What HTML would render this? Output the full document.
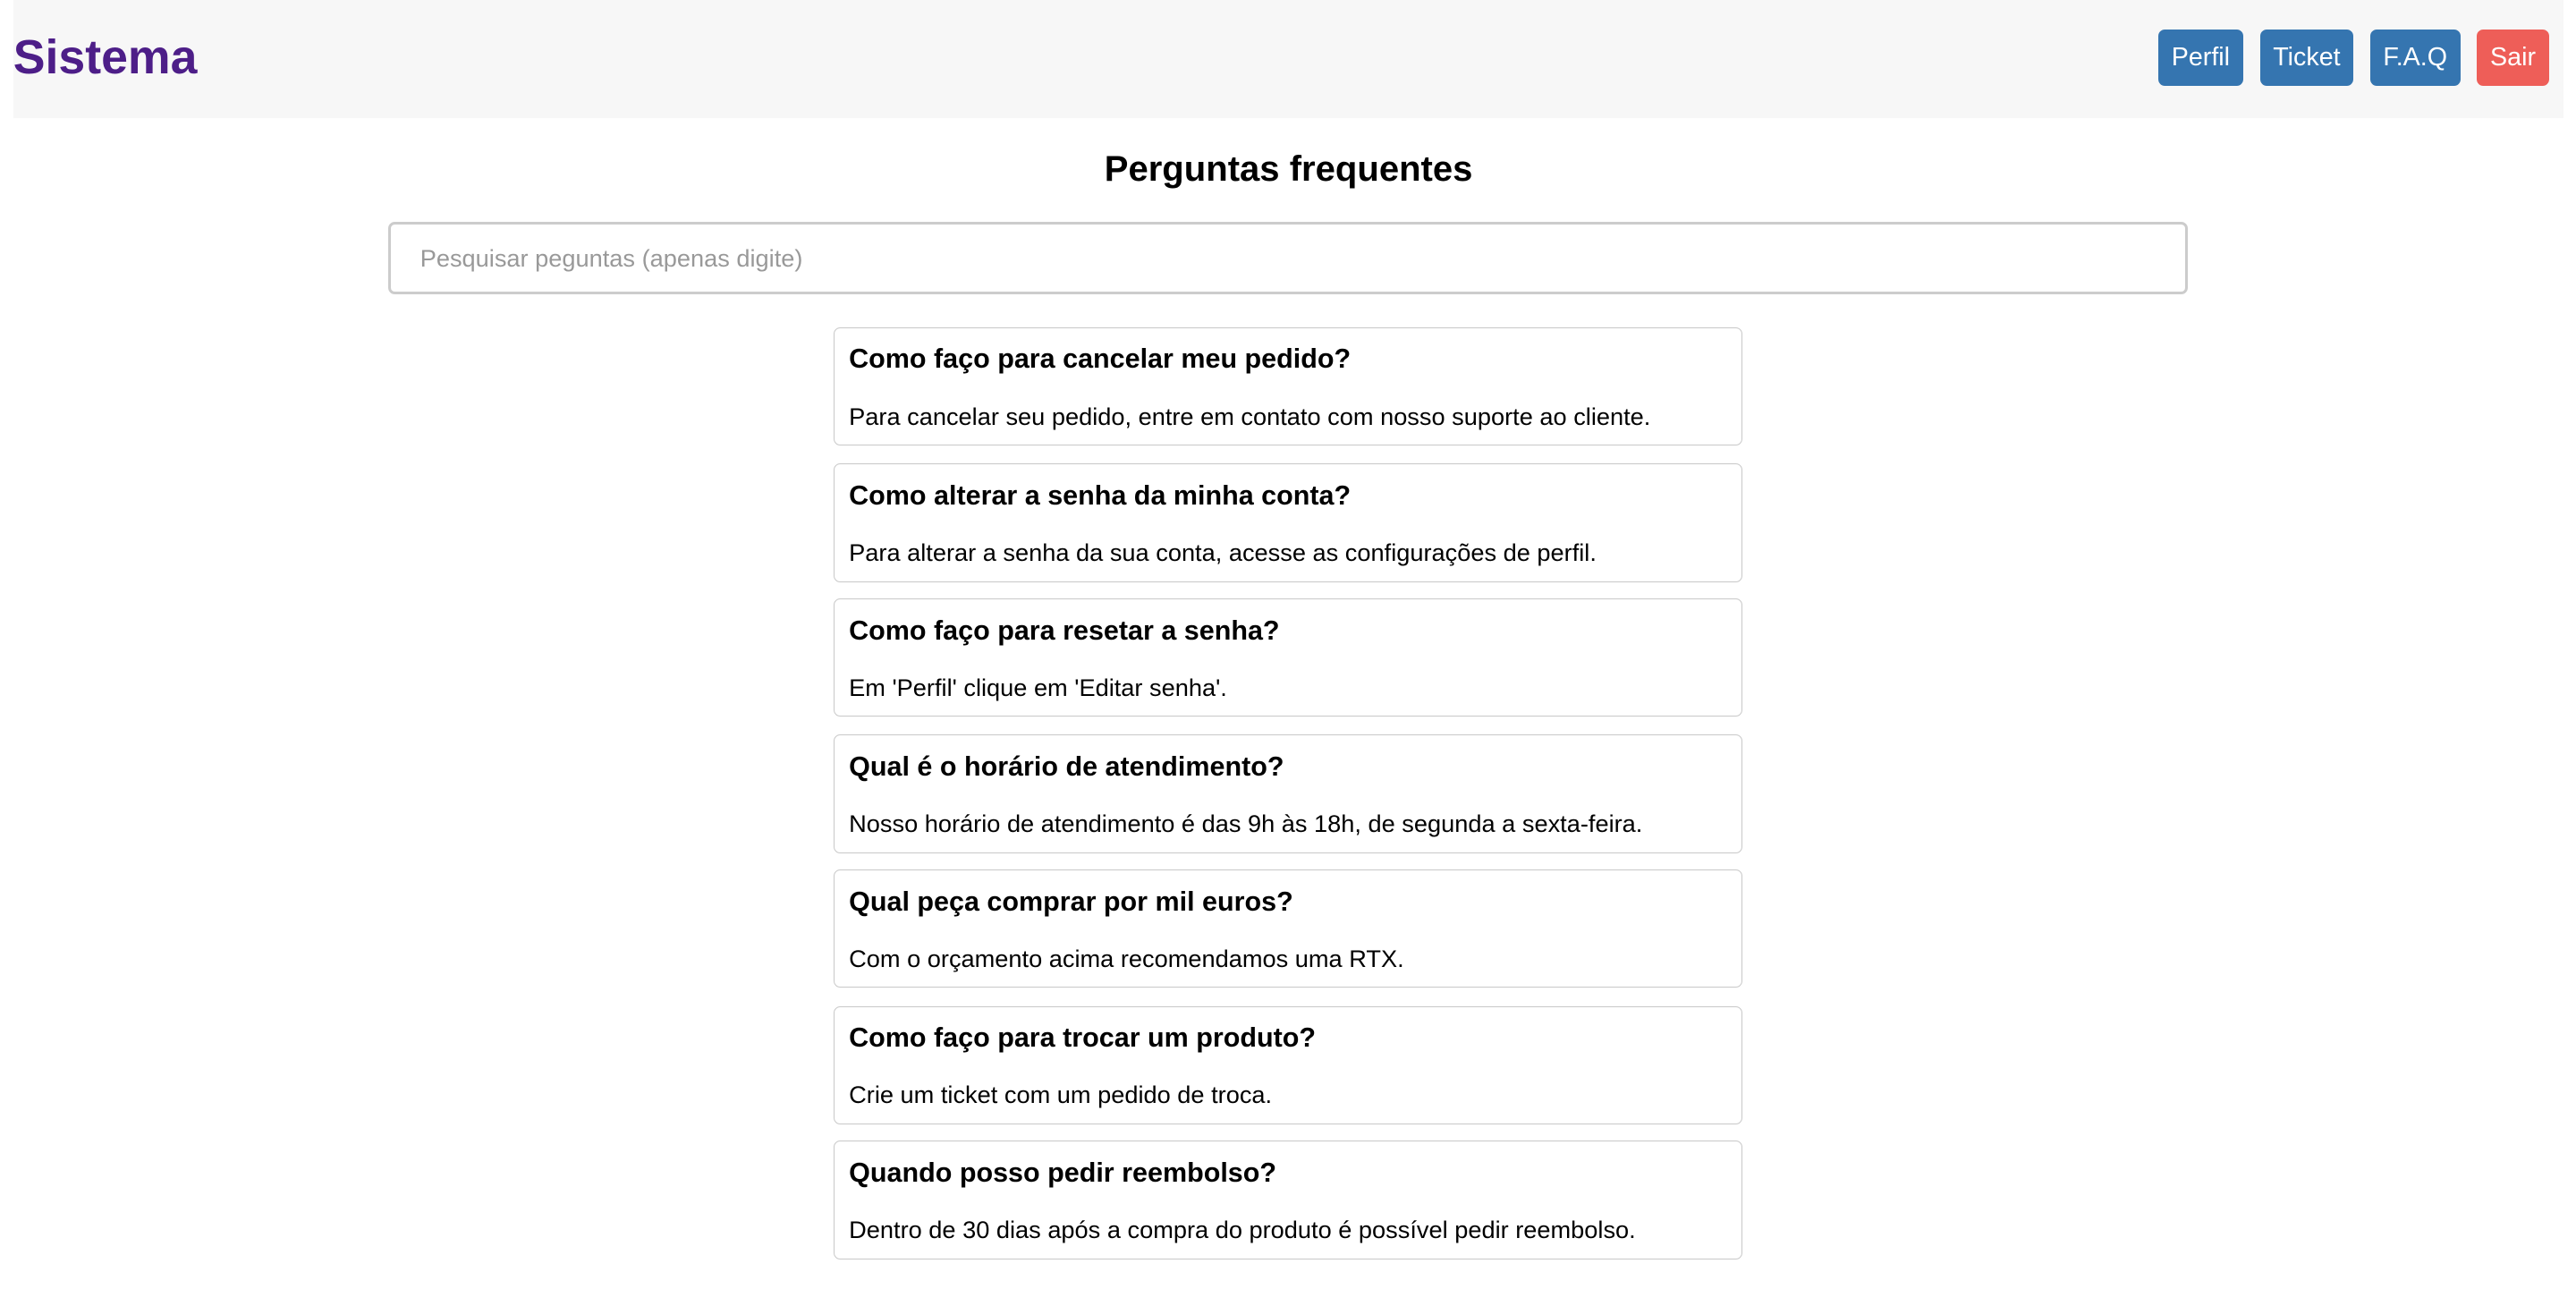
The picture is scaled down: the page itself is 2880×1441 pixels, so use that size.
<!DOCTYPE html>
<html><head><meta charset="utf-8"><style>
html,body{margin:0;padding:0;background:#fff;}
body{zoom:1.8375;width:1568px;height:784px;position:relative;overflow:hidden;font-family:"Liberation Sans",Arial,sans-serif;}
.hdr{position:absolute;left:8px;top:0;width:1552px;height:72px;background:#f7f7f7;}
.logo{position:absolute;left:0px;top:15px;font-size:29.2px;font-weight:bold;color:#4d1e88;line-height:40px;}
.btn{position:absolute;top:18px;height:34px;line-height:34px;border-radius:4px;color:#fff;font-size:15.6px;text-align:center;background:#3575b0;}
h1{position:absolute;left:8px;width:1552px;top:88px;margin:0;text-align:center;font-size:21.8px;line-height:30px;font-weight:bold;}
.search{position:absolute;left:236px;top:135px;width:1092px;height:41px;border:2px solid #ccc;border-radius:4px;box-sizing:content-box;}
.search span{position:absolute;left:18px;top:11px;font-size:14.8px;color:#999;line-height:20px;}
.card{position:absolute;left:507px;width:552px;height:71px;border:1px solid #c8c8c8;border-radius:4px;}
.card b{position:absolute;left:9px;top:8px;font-size:16.6px;line-height:22px;}
.card p{position:absolute;left:9px;top:44px;margin:0;font-size:14.8px;line-height:20px;}
</style></head><body>
<div class="hdr"><div class="logo">Sistema</div></div>
<div class="btn" style="left:1313px;width:52px">Perfil</div>
<div class="btn" style="left:1375px;width:57px">Ticket</div>
<div class="btn" style="left:1442px;width:55px">F.A.Q</div>
<div class="btn" style="left:1507px;width:44px;background:#ee5e58">Sair</div>
<h1>Perguntas frequentes</h1>
<div class="search"><span>Pesquisar peguntas (apenas digite)</span></div>
<div class="card" style="top:199px"><b>Como faço para cancelar meu pedido?</b><p>Para cancelar seu pedido, entre em contato com nosso suporte ao cliente.</p></div>
<div class="card" style="top:282px"><b>Como alterar a senha da minha conta?</b><p>Para alterar a senha da sua conta, acesse as configurações de perfil.</p></div>
<div class="card" style="top:364px"><b>Como faço para resetar a senha?</b><p>Em 'Perfil' clique em 'Editar senha'.</p></div>
<div class="card" style="top:447px"><b>Qual é o horário de atendimento?</b><p>Nosso horário de atendimento é das 9h às 18h, de segunda a sexta-feira.</p></div>
<div class="card" style="top:529px"><b>Qual peça comprar por mil euros?</b><p>Com o orçamento acima recomendamos uma RTX.</p></div>
<div class="card" style="top:612px"><b>Como faço para trocar um produto?</b><p>Crie um ticket com um pedido de troca.</p></div>
<div class="card" style="top:694px"><b>Quando posso pedir reembolso?</b><p>Dentro de 30 dias após a compra do produto é possível pedir reembolso.</p></div>
</body></html>
